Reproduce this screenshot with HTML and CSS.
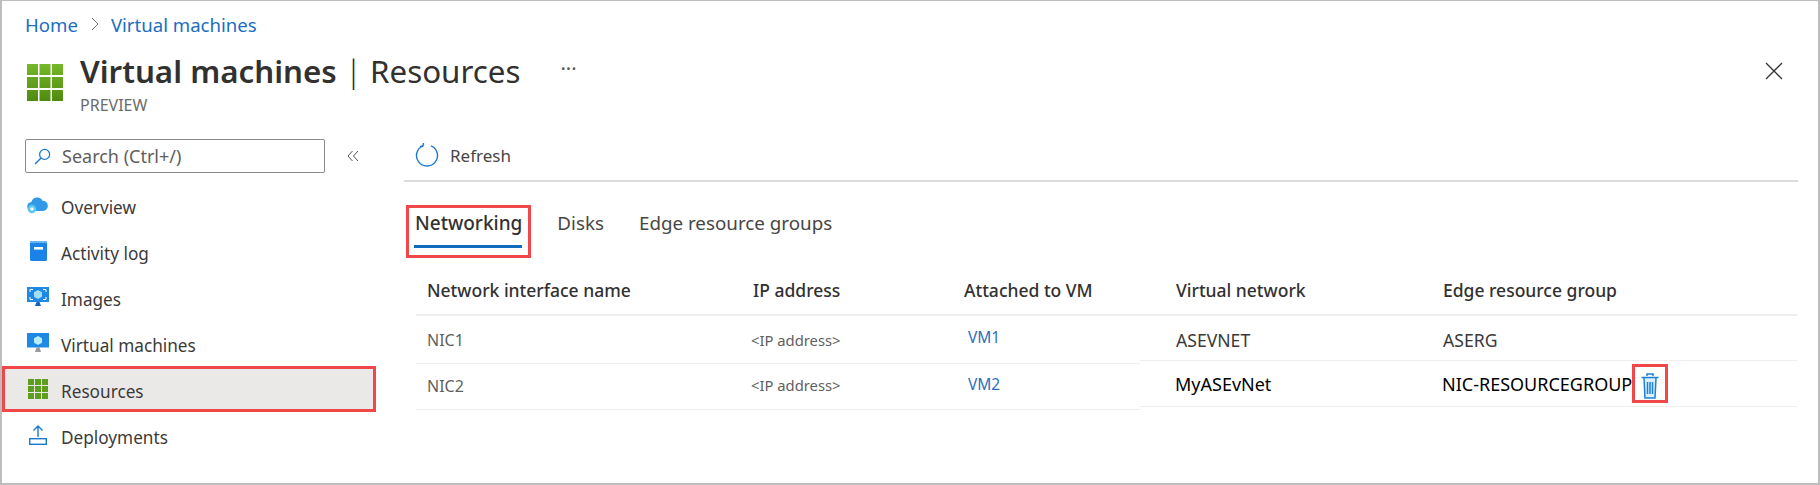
FILE: index.html
```html
<!DOCTYPE html>
<html lang="en">
<head>
<meta charset="utf-8">
<title>Virtual machines | Resources</title>
<link rel="stylesheet" href="styles.css">
</head>
<body>
<div class="frame">
  <nav class="crumbs"><a>Home</a><svg class="chev" viewBox="0 0 10 16"><path d="M2 2l6 6-6 6" fill="none" stroke="#777" stroke-width="1"/></svg><a>Virtual machines</a></nav>
  <header class="head">
    <svg class="logo" viewBox="0 0 36 37"><defs><linearGradient id="g" x1="0" y1="0" x2="0" y2="1"><stop offset="0" stop-color="#76b82a"/><stop offset="1" stop-color="#4f8a10"/></linearGradient></defs><path fill="url(#g)" d="M0 0h11v11H0zM12.500 0h11v11h-11zM25 0h11v11H25zM0 13h11v11H0zM12.500 13h11v11h-11zM25 13h11v11H25zM0 26h11v11H0zM12.500 26h11v11h-11zM25 26h11v11H25z"/></svg>
    <div class="titles">
      <h1><b>Virtual machines</b> <span class="pipe">|</span> Resources</h1>
      <div class="sub">PREVIEW</div>
    </div>
    <span class="more">···</span>
    <svg class="close" viewBox="0 0 18 18"><path d="M1 1l16 16M17 1L1 17" stroke="#333" stroke-width="1.300" fill="none"/></svg>
  </header>
  <div class="body">
    <aside class="side">
      <div class="searchrow">
        <div class="search">
          <svg viewBox="0 0 16 16" width="17" height="17"><circle cx="10" cy="6" r="4.700" fill="none" stroke="#1b78cf" stroke-width="1.200"/><path d="M6.600 9.400L1 15" stroke="#1b78cf" stroke-width="1.300"/></svg>
          <span>Search (Ctrl+/)</span>
        </div>
        <svg class="collapse" viewBox="0 0 12 12"><path d="M5.500 1L1 6l4.500 5M11 1L6.500 6l4.500 5" fill="none" stroke="#555" stroke-width="1"/></svg>
      </div>
      <ul class="menu">
        <li class="item"><svg class="ico" viewBox="0 0 22 22"><path fill="#2f9be8" d="M5 17a4.500 4.500 0 0 1-.6-9A6 6 0 0 1 15.500 6.800 5 5 0 0 1 16 17z"/><circle cx="5" cy="15" r="4.300" fill="#5cc5f2"/><circle cx="5" cy="15" r="1.700" fill="#fff"/></svg><span>Overview</span></li>
        <li class="item"><svg class="ico" viewBox="0 0 22 22"><rect x="3" y="1" width="17" height="20" rx="1.500" fill="#1b82e8"/><rect x="3" y="1" width="17" height="2" fill="#6ab4f2"/><rect x="7" y="7" width="9" height="2.600" fill="#fff"/></svg><span>Activity log</span></li>
        <li class="item"><svg class="ico" viewBox="0 0 22 22"><rect x="0" y="1" width="22" height="15" fill="#1e88e5"/><path d="M3 6V3.500h3M16 3.500h3V6M3 11v2.500h3M16 13.500h3V11" stroke="#fff" fill="none"/><path d="M11 4l4 2.300v4.400L11 13l-4-2.300V6.300z" fill="#9fe0fb"/><path d="M8 20h6l-1.500-4h-3z" fill="#1565b8"/></svg><span>Images</span></li>
        <li class="item"><svg class="ico" viewBox="0 0 22 22"><rect x="0" y="1" width="22" height="14.500" fill="#1e88e5"/><path d="M11 4l4 2.300v4.400L11 13l-4-2.300V6.300z" fill="#b8ecfd"/><path d="M8 20h6l-1.500-4.500h-3z" fill="#9a9a9a"/></svg><span>Virtual machines</span></li>
        <li class="item active"><svg class="ico" viewBox="0 0 22 22"><path fill="#5d9e1f" d="M1 1h6v6H1zM8 1h6v6H8zM15 1h6v6h-6zM1 8h6v6H1zM8 8h6v6H8zM15 8h6v6h-6zM1 15h6v6H1zM8 15h6v6H8zM15 15h6v6h-6z"/></svg><span>Resources</span></li>
        <li class="item"><svg class="ico" viewBox="0 0 22 22"><path d="M11 13V2M6.500 6.500L11 2l4.500 4.500" fill="none" stroke="#1b78cf" stroke-width="1.400"/><rect x="2.700" y="14.700" width="16.600" height="5.600" fill="none" stroke="#1b78cf" stroke-width="1.400"/></svg><span>Deployments</span></li>
      </ul>
    </aside>
    <main class="main">
      <div class="toolbar">
        <svg viewBox="0 0 24 24" width="24" height="24"><path d="M8 2.800A10.500 10.500 0 1 0 16 2.800" fill="none" stroke="#1b78cf" stroke-width="1.400"/><path d="M8.500 0l-.5 3-3 .5" fill="none" stroke="#1b78cf" stroke-width="1.400"/></svg>
        <span>Refresh</span>
      </div>
      <div class="tabs">
        <div class="tab sel">Networking</div>
        <div class="tab">Disks</div>
        <div class="tab">Edge resource groups</div>
      </div>
      <div class="tables">
        <div class="tleft">
          <div class="row hrow"><div class="c1">Network interface name</div><div class="c2">IP address</div><div class="c3">Attached to VM</div></div>
          <div class="row"><div class="c1">NIC1</div><div class="c2">&lt;IP address&gt;</div><div class="c3"><a>VM1</a></div></div>
          <div class="row"><div class="c1">NIC2</div><div class="c2">&lt;IP address&gt;</div><div class="c3"><a>VM2</a></div></div>
        </div>
        <div class="tright">
          <div class="rrow hrow"><div class="c4">Virtual network</div><div class="c5">Edge resource group</div></div>
          <div class="rrow"><div class="c4">ASEVNET</div><div class="c5">ASERG</div></div>
          <div class="rrow edited"><div class="c4">MyASEvNet</div><div class="c5">NIC-RESOURCEGROUP<span class="trash"><svg viewBox="0 0 18 26" width="18" height="26"><path d="M4 5h10l1.500 20h-13z" fill="#dbeefb"/><path d="M6 3V1h6v2M.5 4.500h17M3 5l1 20h10l1-20M6.500 9v12M9 9v12M11.500 9v12" fill="none" stroke="#1b82d8" stroke-width="1.500"/></svg></span></div></div>
        </div>
      </div>
    </main>
  </div>
</div>
</body>
</html>
```
FILE: styles.css
```css
* { box-sizing: border-box; }
html, body { margin: 0; padding: 0; background: #fff; }
body { font-family: "Noto Sans", "Open Sans", sans-serif; color: #3b3a39; }
ul { list-style: none; margin: 0; padding: 0; }
.frame { width: 1820px; height: 485px; border: 2px solid #bdbdbd; border-width: 1px 2px 2px 2px; overflow: hidden; }
.crumbs { display: flex; align-items: center; height: 48px; padding: 0 0 2px 23px; font-size: 18.600px; color: #1b6ec2; }
.chev { width: 10px; height: 16px; margin: 0 11px 0 12px; }
.head { display: flex; align-items: flex-start; height: 71px; padding-left: 25px; position: relative; }
.logo { width: 36px; height: 37px; margin-top: 15px; }
.titles { margin-left: 17px; }
h1 { margin: 0; font-size: 31.300px; font-weight: 400; line-height: 44px; color: #323130; white-space: nowrap; }
h1 b { font-weight: 600; }
.pipe { font-weight: 300; }
.sub { font-size: 16px; line-height: 20px; margin-top: 2px; color: #6b6b6b; }
.more { font-size: 20px; margin: 8px 0 0 40px; line-height: 24px; color: #555; }
.close { position: absolute; right: 35px; top: 13px; width: 18px; height: 18px; }
.body { display: flex; }
.side { width: 402px; padding-top: 19px; }
.searchrow { display: flex; align-items: center; padding-left: 23px; }
.search { width: 300px; height: 34px; border: 1px solid #8a8a8a; border-radius: 2px; display: flex; align-items: center; gap: 11px; padding-left: 8px; font-size: 18px; color: #605e5c; }
.collapse { width: 12px; height: 12px; margin-left: 22px; }
.menu { margin-top: 9px; }
.item { display: flex; align-items: center; height: 46px; font-size: 17.200px; padding-left: 25px; gap: 12px; margin-right: 28px; }
.item span { padding-top: 4px; }
.ico { width: 22px; height: 22px; flex: none; }
.item.active { background: #ebe9e7; outline: 3px solid #f04848; outline-offset: -3px; }
.main { flex: 1; padding-top: 19px; }
.toolbar { display: flex; align-items: center; gap: 11px; height: 43px; margin-right: 20px; padding: 0 0 9px 11px; border-bottom: 2px solid #dcdcdc; font-size: 17px; color: #484644; }
.tabs { display: flex; margin: 23px 0 0 2px; height: 63px; }
.tab { font-size: 18.800px; margin-right: 35px; color: #484644; padding-top: 5px; }
.tab.sel { font-size: 19px; font-weight: 500; color: #323130; border: 3px solid #f04848; padding: 2px 6px 0 6px; margin-right: 26px; height: 53px; position: relative; }
.tab.sel::after { content: ""; position: absolute; left: 5px; right: 6px; bottom: 7px; height: 3px; background: #0f6cbd; }
.tables { display: flex; }
.tleft { width: 724px; margin-left: 12px; }
.tright { width: 657px; }
.row { display: flex; height: 46px; align-items: center; border-bottom: 1px solid #eee; font-size: 16px; color: #5f5f5f; }
.row:nth-child(2) { height: 48px; }
.row:nth-child(3) .c1 { padding-bottom: 2px; }
.row:nth-child(3) .c2 { padding-bottom: 4px; }
.rrow { display: flex; height: 46px; align-items: center; border-bottom: 1px solid #eee; font-size: 17.600px; color: #3b3a39; }
.rrow:nth-child(2) { height: 45px; padding-top: 3px; }
.row.hrow, .rrow.hrow { height: 48px; padding-bottom: 2px; font-size: 17.500px; font-weight: 500; color: #323130; border-bottom: 2px solid #eee; }
.c1 { width: 335px; padding-left: 11px; }
.c2 { width: 213px; font-size: 14.800px; }
.hrow .c1 { width: 337px; }
.hrow .c2 { width: 211px; font-size: 17.500px; }
.c3 { padding-left: 4px; }
.c3 a { color: #2e6fbc; font-size: 15.500px; position: relative; top: -3px; }
.hrow .c3 { padding-left: 0; }
.c4 { width: 303px; padding-left: 36px; }
.c5 { display: flex; align-items: center; }
.edited { color: #000; font-size: 18px; }
.edited .c4 { padding-left: 35px; }
.edited .c5 { margin-left: -1px; }
.trash { display: inline-flex; align-items: flex-end; justify-content: center; width: 36px; height: 39px; border: 3px solid #f04848; padding-bottom: 1px; }
```
